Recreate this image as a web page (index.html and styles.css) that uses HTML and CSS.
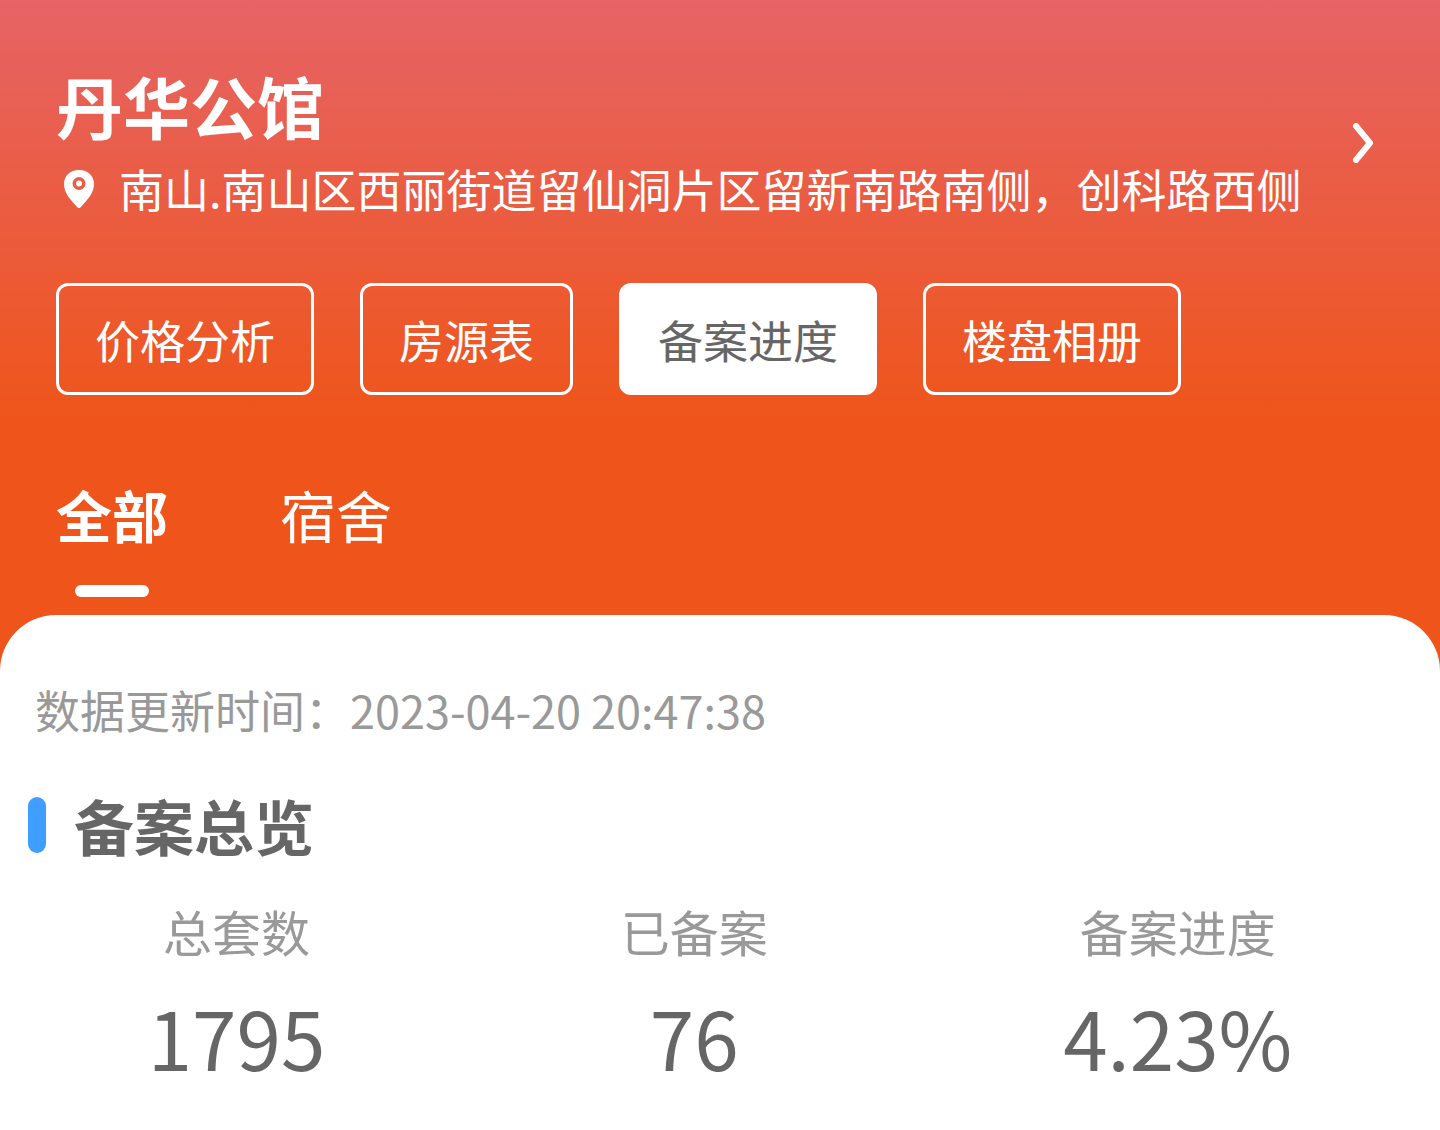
FILE: index.html
```html
<!DOCTYPE html>
<html lang="zh-CN">
<head>
  <meta charset="UTF-8" />
  <meta name="viewport" content="width=device-width, initial-scale=1.0" />
  <title>丹华公馆</title>
  <link rel="stylesheet" href="styles.css">
</head>
<body>

  <header class="top">
    <a class="project" href="#">
      <div class="project-info">
        <h1>丹华公馆</h1>
        <p class="address">
          <svg class="pin" viewBox="0 0 32 40" aria-hidden="true">
            <path fill="#fff" fill-rule="evenodd" d="M16 1C7 1 1 7 1 15c0 9 6 15 13 23q2 2 4 0c7-8 13-14 13-23C31 7 25 1 16 1zM16 8a6.500 6.500 0 1 1 0 13 6.500 6.500 0 0 1 0-13z"/>
            <circle cx="16" cy="14.500" r="3" fill="#fff"/>
          </svg>
          <span>南山.南山区西丽街道留仙洞片区留新南路南侧，创科路西侧</span>
        </p>
      </div>
      <svg class="arrow" viewBox="0 0 24 40" aria-hidden="true">
        <path d="M5 3l14 17L5 37" fill="none" stroke="#fff" stroke-width="6" stroke-linecap="round" stroke-linejoin="round"/>
      </svg>
    </a>

    <nav class="menu">
      <button type="button">价格分析</button>
      <button type="button">房源表</button>
      <button type="button" class="active">备案进度</button>
      <button type="button">楼盘相册</button>
    </nav>

    <div class="tabs">
      <button type="button" class="active">全部</button>
      <button type="button">宿舍</button>
    </div>
  </header>

  <main class="panel">
    <p class="update">数据更新时间：2023-04-20 20:47:38</p>
    <h2>备案总览</h2>
    <dl class="stats">
      <div>
        <dt>总套数</dt>
        <dd>1795</dd>
      </div>
      <div>
        <dt>已备案</dt>
        <dd>76</dd>
      </div>
      <div>
        <dt>备案进度</dt>
        <dd>4.23%</dd>
      </div>
    </dl>
  </main>

</body>
</html>
```

FILE: styles.css
```css
* {
  box-sizing: border-box;
}

body {
  margin: 0;
  font-family: "Noto Sans CJK SC", sans-serif;
  background: white;
  color: #666;
}

h1, h2, p, dl, dd {
  margin: 0;
}

button {
  font-family: inherit;
  cursor: pointer;
}

.top {
  background: linear-gradient(to bottom, #e66366 0, #ef551b 420px);
  color: white;
  padding: 63px 56px 74px;
}

.project {
  display: flex;
  align-items: center;
  justify-content: space-between;
  color: white;
  text-decoration: none;
}

.project h1 {
  margin-bottom: 8px;
  font-size: 67px;
  line-height: 84px;
}

.address {
  display: flex;
  align-items: center;
  gap: 24px;
  font-size: 45px;
  line-height: 68px;
}

.pin {
  width: 32px;
  height: 40px;
  margin-left: 7px;
}

.arrow {
  width: 24px;
  height: 40px;
  margin-right: 9px;
}

.menu {
  display: flex;
  gap: 46px;
  margin-top: 60px;
}

.menu button {
  height: 112px;
  padding: 0 36px;
  border: 3px solid white;
  border-radius: 12px;
  background: transparent;
  color: white;
  font-size: 45px;
}

.menu .active {
  background: white;
  color: #666;
}

.tabs {
  display: flex;
  gap: 112px;
  margin-top: 79px;
}

.tabs button {
  padding: 0 0 43px;
  border: none;
  background: transparent;
  color: white;
  font-size: 56px;
  line-height: 80px;
}

.tabs .active {
  position: relative;
  font-weight: bold;
}

.tabs .active::after {
  content: "";
  position: absolute;
  bottom: 0;
  left: 50%;
  width: 74px;
  height: 12px;
  border-radius: 6px;
  background: white;
  transform: translateX(-50%);
}

.panel {
  margin-top: -56px;
  padding: 61px 0 40px;
  border-radius: 56px 56px 0 0;
  background: white;
}

.update {
  padding-left: 35px;
  color: #999;
  font-size: 45px;
  line-height: 68px;
}

h2 {
  display: flex;
  align-items: center;
  gap: 28px;
  margin-top: 37px;
  padding-left: 28px;
  font-size: 60px;
  line-height: 88px;
}

h2::before {
  content: "";
  width: 18px;
  height: 56px;
  border-radius: 9px;
  background: #409eff;
}

.stats {
  display: flex;
  justify-content: space-around;
  margin-top: 26px;
  text-align: center;
}

.stats dt {
  color: #999;
  font-size: 49px;
  line-height: 72px;
}

.stats dd {
  margin-top: 9px;
  font-size: 80px;
  line-height: 120px;
}
```
